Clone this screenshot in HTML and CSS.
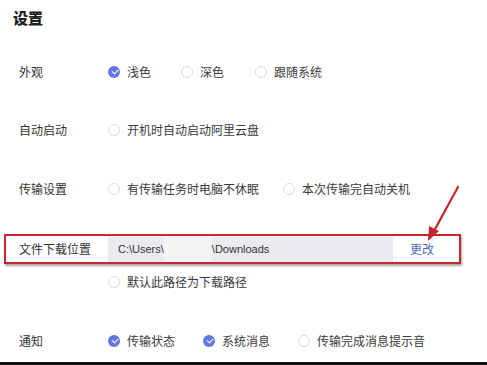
FILE: index.html
```html
<!DOCTYPE html>
<html lang="zh-CN">
<head>
    <meta charset="UTF-8">
    <meta name="viewport" content="width=device-width, initial-scale=1.0">
    <title>设置</title>
    <link rel="stylesheet" href="styles.css">
</head>
<body>
    <div class="page">
        <h1 class="title">设置</h1>

        <div class="row row-look">
            <span class="label">外观</span>
            <div class="options">
                <span class="option"><i class="radio checked"></i>浅色</span>
                <span class="option"><i class="radio"></i>深色</span>
                <span class="option"><i class="radio"></i>跟随系统</span>
            </div>
        </div>

        <div class="row row-auto">
            <span class="label">自动启动</span>
            <div class="options">
                <span class="option"><i class="radio"></i>开机时自动启动阿里云盘</span>
            </div>
        </div>

        <div class="row row-transfer">
            <span class="label">传输设置</span>
            <div class="options">
                <span class="option"><i class="radio"></i>有传输任务时电脑不休眠</span>
                <span class="option"><i class="radio"></i>本次传输完自动关机</span>
            </div>
        </div>

        <div class="download">
            <span class="label">文件下载位置</span>
            <div class="path">C:\Users\<span class="blur"></span>\Downloads</div>
            <a class="change" href="#">更改</a>
        </div>

        <div class="row row-default">
            <span class="label"></span>
            <div class="options">
                <span class="option"><i class="radio"></i>默认此路径为下载路径</span>
            </div>
        </div>

        <div class="row row-notify">
            <span class="label">通知</span>
            <div class="options">
                <span class="option"><i class="radio checked"></i>传输状态</span>
                <span class="option"><i class="radio checked"></i>系统消息</span>
                <span class="option"><i class="radio"></i>传输完成消息提示音</span>
            </div>
        </div>

        <div class="bottom-bar"></div>

        <!-- annotation arrow pointing at 更改 -->
        <svg class="arrow" width="60" height="70" viewBox="0 0 60 70">
            <line x1="48" y1="2" x2="24" y2="46" stroke="#c3262c" stroke-width="2.2" stroke-linecap="round"/>
            <polygon points="18,56 19,41 29,46" fill="#c3262c"/>
        </svg>
    </div>
</body>
</html>
```

FILE: styles.css
```css
* {
    box-sizing: border-box;
}

body {
    margin: 0;
    padding: 0;
    background-color: #fff;
    font-family: "Noto Sans CJK SC", "Noto Sans", sans-serif;
    color: #333;
    font-size: 12px;
}

.page {
    position: relative;
    width: 487px;
    height: 365px;
    display: flex;
    flex-direction: column;
    overflow: hidden;
}

.title {
    margin: 0;
    padding: 9px 0 0 13px;
    height: 43px;
    font-size: 15px;
    line-height: 18px;
    font-weight: 900;
    color: #1e1e1e;
}

.row {
    display: flex;
    align-items: center;
    padding-left: 19px;
}

.row-look {
    height: 58px;
}

.row-auto {
    height: 58px;
}

.row-transfer {
    height: 59px;
}

.row-default {
    height: 36px;
}

.row-notify {
    margin-top: 30px;
    height: 22px;
}

.label {
    width: 89px;
    flex-shrink: 0;
    line-height: 16px;
}

.options {
    display: flex;
    align-items: center;
    gap: 30px;
}

.row-look .options {
    gap: 0;
}

.row-look .option:nth-child(2) {
    margin-left: 30px;
}

.row-look .option:nth-child(3) {
    margin-left: 31px;
}

.row-transfer .options {
    gap: 24px;
}

.row-notify .options {
    gap: 28px;
}

.option {
    display: flex;
    align-items: center;
    gap: 7px;
    line-height: 16px;
    color: #3a3a3a;
}

.radio {
    display: inline-block;
    position: relative;
    width: 12px;
    height: 12px;
    border-radius: 50%;
    border: 1px solid #dcdcdc;
    background: #fff;
}

.radio.checked {
    border: none;
    background: #6178e3;
}

/* check mark */
.radio.checked::after {
    content: "";
    position: absolute;
    left: 3.5px;
    top: 3px;
    width: 5px;
    height: 2.5px;
    border-left: 1.5px solid #fff;
    border-bottom: 1.5px solid #fff;
    transform: rotate(-45deg);
}

.download {
    display: flex;
    align-items: center;
    margin: 16px 0 0 4px;
    width: 457px;
    height: 30px;
    padding-left: 13px;
    border: 2px solid #c9262d;
    box-shadow: 1px 2px 2px rgba(0, 0, 0, 0.35);
}

.path {
    display: flex;
    align-items: center;
    width: 285px;
    height: 25px;
    padding-left: 10px;
    background: #ebebef;
    font-family: "Liberation Sans", Arial, sans-serif;
    font-size: 11px;
    color: #333;
}

.blur {
    display: inline-block;
    width: 48px;
    height: 25px;
    background: #f4f4f6;
}

.change {
    margin-left: 17px;
    color: #4f6bc0;
    text-decoration: none;
    line-height: 16px;
}

.bottom-bar {
    margin-top: auto;
    height: 3px;
    background: #111;
}

.arrow {
    position: absolute;
    left: 410px;
    top: 185px;
}
```
